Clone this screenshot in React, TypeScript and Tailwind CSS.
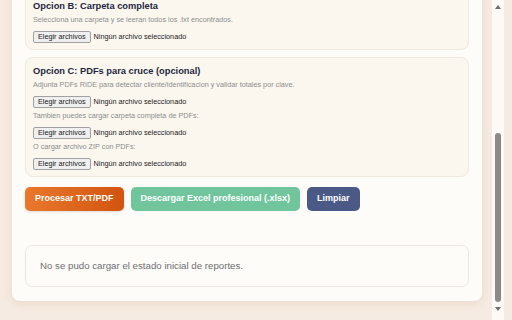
import React from 'react';

function FileRow() {
  return (
    <div className="flex items-center gap-[3px] mt-[6px]">
      <button className="h-[12px] px-[4px] bg-[#efefef] border border-[#a0a0a0] rounded-[2px] text-[7.25px] leading-none text-[#1a1a1a]">
        Elegir archivos
      </button>
      <span className="text-[7.25px] leading-none text-[#1a1a1a]">Ningún archivo seleccionado</span>
    </div>
  );
}

function Hint({ children }: { children: React.ReactNode }) {
  return <p className="text-[7.25px] leading-[10px] text-[#8d8d8d] mt-[3px]">{children}</p>;
}

function OptionBox({ title, children }: { title: string; children: React.ReactNode }) {
  return (
    <div className="bg-[#fbf7ef] border border-[#f0e8dc] rounded-[8px] px-[7px] pt-[8px] pb-[6px]">
      <h3 className="text-[9.3px] leading-[11px] font-bold text-[#1c2740]">{title}</h3>
      {children}
    </div>
  );
}

export default function App() {
  return (
    <div className="h-screen w-full overflow-hidden bg-[#f6ebe2] flex font-['Liberation_Sans',Arial,sans-serif]">
      <div className="flex-1 pl-[12px] pr-[10px] overflow-hidden">
        <div className="-mt-[21px] bg-[#fdfcf8] rounded-b-[8px] shadow-[0_2px_10px_rgba(200,160,130,0.25)] px-[13px] pt-[13px] pb-[14px]">
          <OptionBox title="Opcion B: Carpeta completa">
            <Hint>Selecciona una carpeta y se leeran todos los .txt encontrados.</Hint>
            <FileRow />
          </OptionBox>

          <div className="mt-[7px]">
            <OptionBox title="Opcion C: PDFs para cruce (opcional)">
              <Hint>Adjunta PDFs RIDE para detectar cliente/identificacion y validar totales por clave.</Hint>
              <FileRow />
              <Hint>Tambien puedes cargar carpeta completa de PDFs:</Hint>
              <FileRow />
              <Hint>O cargar archivo ZIP con PDFs:</Hint>
              <FileRow />
            </OptionBox>
          </div>

          {/* Actions */}
          <div className="flex gap-[7px] mt-[10px]">
            <button className="h-[24px] px-[10px] rounded-[5px] bg-gradient-to-r from-[#e9782b] to-[#d2540e] text-white text-[9px] font-bold shadow-sm">
              Procesar TXT/PDF
            </button>
            <button className="h-[24px] px-[10px] rounded-[5px] bg-[#70c59c] text-white text-[9px] font-bold">
              Descargar Excel profesional (.xlsx)
            </button>
            <button className="h-[24px] px-[10px] rounded-[5px] bg-[#4a5985] text-white text-[9px] font-bold">
              Limpiar
            </button>
          </div>

          {/* Reports status */}
          <div className="mt-[34px] h-[42px] flex items-center bg-[#fdfcf9] border border-[#ebe7e1] rounded-[7px] px-[14px]">
            <p className="text-[9.7px] text-[#6e6e6e]">No se pudo cargar el estado inicial de reportes.</p>
          </div>
        </div>
      </div>

      {/* Scrollbar */}
      <div className="w-[12px] mr-[8px] bg-[#fcf9f6] flex flex-col items-center">
        <svg width="6" height="4" viewBox="0 0 6 4" className="mt-[5px]">
          <path d="M0 4 L3 0 L6 4 Z" fill="#6f6f6f" />
        </svg>
        <div className="w-[6px] mt-[124px] h-[169px] rounded-full bg-[#8a8a8a]" />
        <svg width="6" height="4" viewBox="0 0 6 4" className="mt-[5px]">
          <path d="M0 0 L3 4 L6 0 Z" fill="#6f6f6f" />
        </svg>
      </div>
    </div>
  );
}
